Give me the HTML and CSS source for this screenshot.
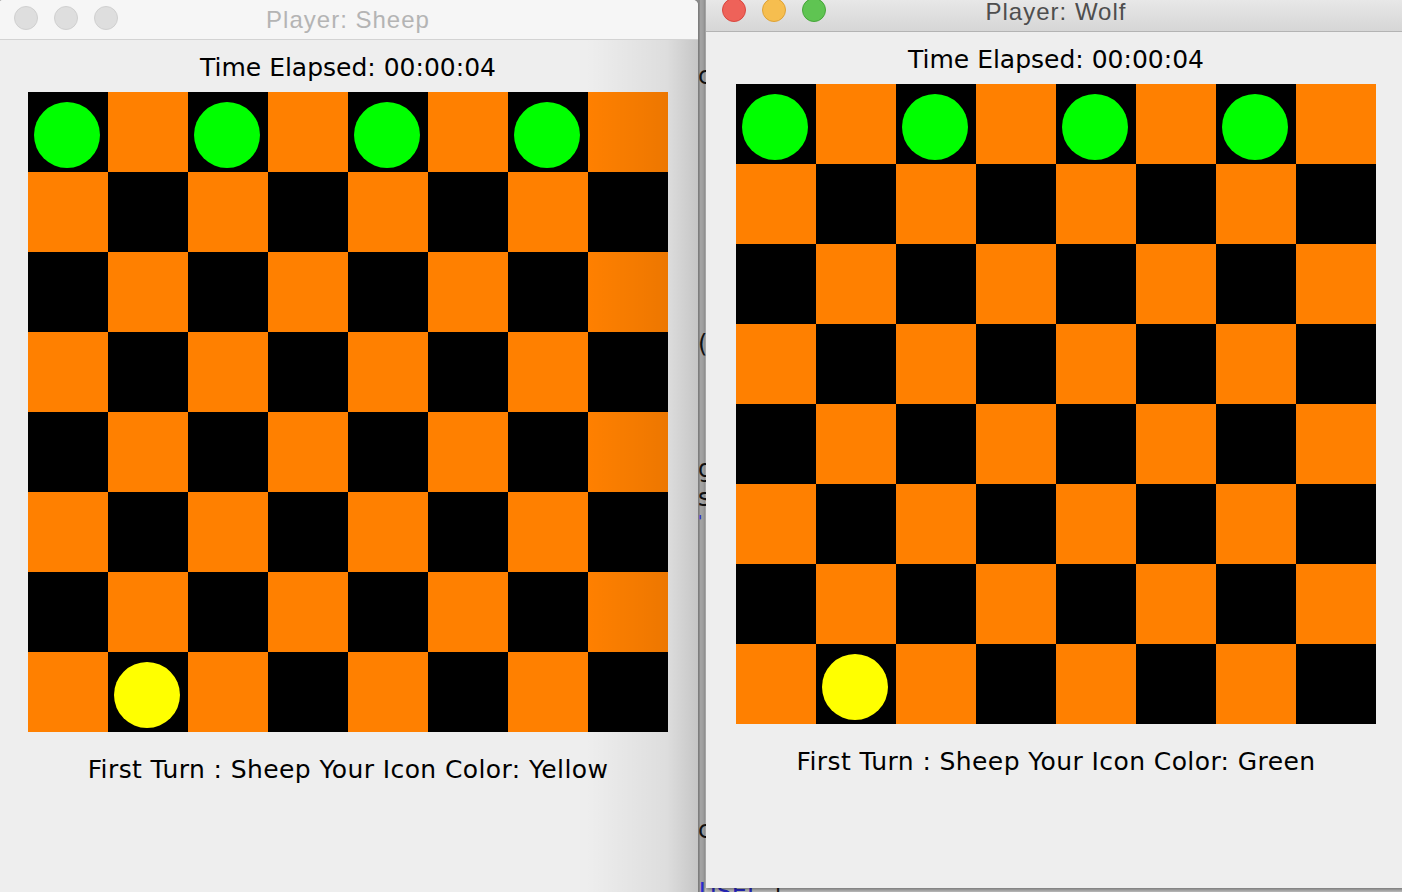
FILE: index.html
```html
<!DOCTYPE html>
<html>
<head>
<meta charset="utf-8">
<link rel="stylesheet" href="styles.css">
</head>
<body>
<div class="desktop">
  <span class="code c1">c</span>
  <span class="code c2">(</span>
  <span class="code c3">g</span>
  <span class="code c4">s</span>
  <span class="code blue c5">'</span>
  <span class="code c6">c</span>
  <span class="code blue c7">USEI</span>
  <span class="code c8">|</span>

  <div class="window win-left inactive">
    <div class="titlebar">
      <div class="lights"><span class="light"></span><span class="light"></span><span class="light"></span></div>
      <div class="title">Player: Sheep</div>
    </div>
    <div class="content">
      <div class="time">Time Elapsed: 00:00:04</div>
      <div class="board">
        <div class="cell b"><span class="piece green"></span></div><div class="cell o"></div><div class="cell b"><span class="piece green"></span></div><div class="cell o"></div><div class="cell b"><span class="piece green"></span></div><div class="cell o"></div><div class="cell b"><span class="piece green"></span></div><div class="cell o"></div>
        <div class="cell o"></div><div class="cell b"></div><div class="cell o"></div><div class="cell b"></div><div class="cell o"></div><div class="cell b"></div><div class="cell o"></div><div class="cell b"></div>
        <div class="cell b"></div><div class="cell o"></div><div class="cell b"></div><div class="cell o"></div><div class="cell b"></div><div class="cell o"></div><div class="cell b"></div><div class="cell o"></div>
        <div class="cell o"></div><div class="cell b"></div><div class="cell o"></div><div class="cell b"></div><div class="cell o"></div><div class="cell b"></div><div class="cell o"></div><div class="cell b"></div>
        <div class="cell b"></div><div class="cell o"></div><div class="cell b"></div><div class="cell o"></div><div class="cell b"></div><div class="cell o"></div><div class="cell b"></div><div class="cell o"></div>
        <div class="cell o"></div><div class="cell b"></div><div class="cell o"></div><div class="cell b"></div><div class="cell o"></div><div class="cell b"></div><div class="cell o"></div><div class="cell b"></div>
        <div class="cell b"></div><div class="cell o"></div><div class="cell b"></div><div class="cell o"></div><div class="cell b"></div><div class="cell o"></div><div class="cell b"></div><div class="cell o"></div>
        <div class="cell o"></div><div class="cell b"><span class="piece yellow"></span></div><div class="cell o"></div><div class="cell b"></div><div class="cell o"></div><div class="cell b"></div><div class="cell o"></div><div class="cell b"></div>
      </div>
      <div class="status">First Turn : Sheep Your Icon Color: Yellow</div>
    </div>
    <div class="shade"></div>
  </div>

  <div class="window win-right active">
    <div class="titlebar">
      <div class="lights"><span class="light red"></span><span class="light yellowl"></span><span class="light greenl"></span></div>
      <div class="title">Player: Wolf</div>
    </div>
    <div class="content">
      <div class="time">Time Elapsed: 00:00:04</div>
      <div class="board">
        <div class="cell b"><span class="piece green"></span></div><div class="cell o"></div><div class="cell b"><span class="piece green"></span></div><div class="cell o"></div><div class="cell b"><span class="piece green"></span></div><div class="cell o"></div><div class="cell b"><span class="piece green"></span></div><div class="cell o"></div>
        <div class="cell o"></div><div class="cell b"></div><div class="cell o"></div><div class="cell b"></div><div class="cell o"></div><div class="cell b"></div><div class="cell o"></div><div class="cell b"></div>
        <div class="cell b"></div><div class="cell o"></div><div class="cell b"></div><div class="cell o"></div><div class="cell b"></div><div class="cell o"></div><div class="cell b"></div><div class="cell o"></div>
        <div class="cell o"></div><div class="cell b"></div><div class="cell o"></div><div class="cell b"></div><div class="cell o"></div><div class="cell b"></div><div class="cell o"></div><div class="cell b"></div>
        <div class="cell b"></div><div class="cell o"></div><div class="cell b"></div><div class="cell o"></div><div class="cell b"></div><div class="cell o"></div><div class="cell b"></div><div class="cell o"></div>
        <div class="cell o"></div><div class="cell b"></div><div class="cell o"></div><div class="cell b"></div><div class="cell o"></div><div class="cell b"></div><div class="cell o"></div><div class="cell b"></div>
        <div class="cell b"></div><div class="cell o"></div><div class="cell b"></div><div class="cell o"></div><div class="cell b"></div><div class="cell o"></div><div class="cell b"></div><div class="cell o"></div>
        <div class="cell o"></div><div class="cell b"><span class="piece yellow"></span></div><div class="cell o"></div><div class="cell b"></div><div class="cell o"></div><div class="cell b"></div><div class="cell o"></div><div class="cell b"></div>
      </div>
      <div class="status">First Turn : Sheep Your Icon Color: Green</div>
    </div>
  </div>
</div>
</body>
</html>
```
FILE: styles.css
```css
html, body {
  margin: 0;
  padding: 0;
}
body {
  width: 1402px;
  height: 892px;
  overflow: hidden;
  background: #a2a2a2;
}
.desktop {
  position: relative;
  width: 1402px;
  height: 892px;
  overflow: hidden;
  background: linear-gradient(to right, #8c8c8c 0, #8c8c8c 700px, #a3a3a3 700px, #a3a3a3 705px, #c9c9c9 705px);
}
.code {
  position: absolute;
  left: 698px;
  font-family: "DejaVu Sans", sans-serif;
  font-size: 24px;
  line-height: 28px;
  color: #111;
}
.code.blue { color: #2a2ad0; }
.c1 { top: 62px; }
.c2 { top: 330px; }
.c3 { top: 455px; }
.c4 { top: 484px; }
.c5 { top: 514px; font-size: 16px; line-height: 16px; }
.c6 { top: 816px; }
.c7 { top: 878px; left: 699px; }
.c8 { top: 878px; left: 774px; }

.window {
  position: absolute;
  width: 700px;
  background: #eeeeee;
  overflow: hidden;
  border-radius: 5px 5px 0 0;
}
.win-left {
  left: -2px;
  top: 0;
  height: 920px;
  box-shadow: 1px 0 0 #7d7d7d;
}
.win-right {
  left: 706px;
  top: -8px;
  height: 896px;
  box-shadow: 0 2px 4px rgba(0, 0, 0, 0.45);
}
.titlebar {
  position: relative;
  height: 39px;
  display: flex;
  justify-content: center;
  align-items: center;
}
.inactive .titlebar {
  background: #f6f6f6;
  border-bottom: 1px solid #d3d3d3;
}
.active .titlebar {
  background: linear-gradient(#ececec, #d6d6d6);
  border-bottom: 1px solid #b3b3b3;
}
.lights {
  position: absolute;
  left: 16px;
  top: 6px;
  display: flex;
  gap: 16px;
}
.light {
  width: 22px;
  height: 22px;
  border-radius: 50%;
  background: #dedede;
  border: 1px solid #d0d0d0;
}
.light.red { background: #ee6259; border-color: #d9473f; }
.light.yellowl { background: #f6be4f; border-color: #dea236; }
.light.greenl { background: #5fc452; border-color: #47a63a; }
.title {
  font-family: "Liberation Sans", Arial, sans-serif;
  font-size: 24px;
  letter-spacing: 1px;
  line-height: 28px;
}
.inactive .title { color: #b4b4b4; }
.active .title { color: #4e4e4e; }

.content {
  display: flex;
  flex-direction: column;
  align-items: center;
}
.time {
  font-family: "DejaVu Sans", sans-serif;
  font-size: 25px;
  line-height: 30px;
  color: #000;
  margin-top: 13px;
  margin-bottom: 9px;
}
.board {
  display: grid;
  grid-template-columns: repeat(8, 80px);
  grid-template-rows: repeat(8, 80px);
}
.cell.b { background: #000000; }
.cell.o { background: #ff8000; }
.piece {
  display: block;
  width: 66px;
  height: 66px;
  margin: 10px 0 0 6px;
  border-radius: 50%;
}
.piece.green { background: #00ff00; }
.piece.yellow { background: #ffff00; }
.status {
  font-family: "DejaVu Sans", sans-serif;
  font-size: 25px;
  letter-spacing: 0.4px;
  line-height: 30px;
  color: #000;
  margin-top: 23px;
}
.shade {
  position: absolute;
  top: 40px;
  right: 0;
  width: 112px;
  bottom: 0;
  background: linear-gradient(to right, rgba(0,0,0,0) 0, rgba(0,0,0,0.07) 72%, rgba(0,0,0,0.17) 100%);
  pointer-events: none;
}
```
